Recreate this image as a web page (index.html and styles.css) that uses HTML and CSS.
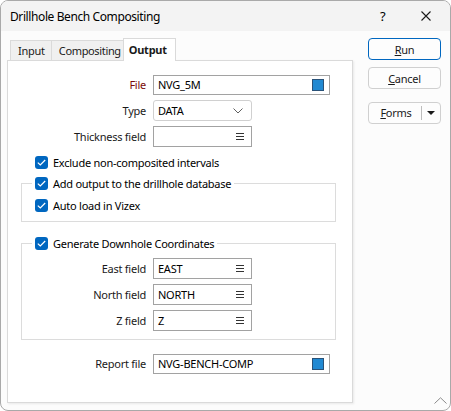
FILE: index.html
```html
<!DOCTYPE html>
<html lang="en">
<head>
    <meta charset="UTF-8">
    <title>Drillhole Bench Compositing</title>
    <link rel="stylesheet" href="styles.css">
</head>
<body>

<div class="window">
    <div class="titlebar">
        <span class="title">Drillhole Bench Compositing</span>
        <span class="help">?</span>
        <span class="close">
            <svg width="10" height="10" viewBox="0 0 10 10"><path d="M0.5 0.5 L9.5 9.5 M9.5 0.5 L0.5 9.5" stroke="#1a1a1a" stroke-width="1.1" fill="none"/></svg>
        </span>
    </div>

    <div class="content">
        <div class="main">
            <div class="tabs">
                <div class="tab input">Input</div>
                <div class="tab compositing">Compositing</div>
                <div class="tab active">Output</div>
            </div>

            <div class="panel">
                <div class="row">
                    <label class="label required">File</label>
                    <div class="field wide">
                        <span>NVG_5M</span>
                        <span class="file-icon"></span>
                    </div>
                </div>
                <div class="row">
                    <label class="label">Type</label>
                    <div class="field combo">
                        <span>DATA</span>
                        <svg width="10" height="6" viewBox="0 0 10 6"><path d="M0.5 0.5 L5 5 L9.5 0.5" stroke="#606060" fill="none"/></svg>
                    </div>
                </div>
                <div class="row">
                    <label class="label">Thickness field</label>
                    <div class="field">
                        <span></span>
                        <span class="list-icon"></span>
                    </div>
                </div>

                <div class="check-row top">
                    <span class="check"><svg width="9" height="7" viewBox="0 0 9 7"><path d="M0.8 3.6 L3.3 6 L8.2 1" stroke="#fff" stroke-width="1.2" fill="none"/></svg></span>
                    <span>Exclude non-composited intervals</span>
                </div>

                <fieldset class="group first">
                    <legend class="check-row">
                        <span class="check"><svg width="9" height="7" viewBox="0 0 9 7"><path d="M0.8 3.6 L3.3 6 L8.2 1" stroke="#fff" stroke-width="1.2" fill="none"/></svg></span>
                        <span>Add output to the drillhole database</span>
                    </legend>
                    <div class="check-row inner">
                        <span class="check"><svg width="9" height="7" viewBox="0 0 9 7"><path d="M0.8 3.6 L3.3 6 L8.2 1" stroke="#fff" stroke-width="1.2" fill="none"/></svg></span>
                        <span>Auto load in Vizex</span>
                    </div>
                </fieldset>

                <fieldset class="group second">
                    <legend class="check-row">
                        <span class="check"><svg width="9" height="7" viewBox="0 0 9 7"><path d="M0.8 3.6 L3.3 6 L8.2 1" stroke="#fff" stroke-width="1.2" fill="none"/></svg></span>
                        <span>Generate Downhole Coordinates</span>
                    </legend>
                    <div class="row">
                        <label class="label">East field</label>
                        <div class="field">
                            <span>EAST</span>
                            <span class="list-icon"></span>
                        </div>
                    </div>
                    <div class="row">
                        <label class="label">North field</label>
                        <div class="field">
                            <span>NORTH</span>
                            <span class="list-icon"></span>
                        </div>
                    </div>
                    <div class="row">
                        <label class="label">Z field</label>
                        <div class="field">
                            <span>Z</span>
                            <span class="list-icon"></span>
                        </div>
                    </div>
                </fieldset>

                <div class="row report">
                    <label class="label">Report file</label>
                    <div class="field wide">
                        <span>NVG-BENCH-COMP</span>
                        <span class="file-icon"></span>
                    </div>
                </div>
            </div>
        </div>

        <div class="buttons">
            <button class="btn primary"><u>R</u>un</button>
            <button class="btn"><u>C</u>ancel</button>
            <div class="btn split">
                <span class="split-text"><u>F</u>orms</span>
                <span class="split-arrow"></span>
            </div>
        </div>
    </div>

    <span class="grip">
        <svg width="13" height="7" viewBox="0 0 13 7"><path d="M0.5 6.5 L6.5 0.8 L12.5 6.5" stroke="#8a8a8a" fill="none"/></svg>
    </span>
</div>

</body>
</html>
```

FILE: styles.css
```css
/* Dialog window */
body {
    margin: 0;
    padding: 0;
    font-family: "Noto Sans", "Open Sans", sans-serif;
    font-size: 11px;
    letter-spacing: -0.25px;
    color: #000;
    background-color: #fff;
}
.window {
    position: relative;
    width: 451px;
    height: 411px;
    box-sizing: border-box;
    border: 1px solid #a9a9a9;
    border-radius: 8px;
    overflow: hidden;
    background-color: #fcfcfc;
}
.titlebar {
    display: flex;
    align-items: center;
    height: 30px;
    padding-left: 9px;
    background-color: #f3f3f3;
    font-size: 12px;
    letter-spacing: -0.4px;
}
.title {
    flex: 1;
}
.help {
    width: 12px;
    margin-right: 29px;
    font-size: 13px;
}
.close {
    display: flex;
    margin-right: 19px;
}

.content {
    display: flex;
    padding: 6px 0 0 6px;
}
.main {
    width: 346px;
}

/* Tabs */
.tabs {
    display: flex;
    align-items: flex-end;
    height: 23px;
    padding-left: 3px;
}
.tab {
    height: 20px;
    line-height: 19px;
    box-sizing: border-box;
    border: 1px solid #dadada;
    border-bottom: none;
    border-right: none;
    background-color: #f0f0f0;
    color: #1a1a1a;
}
.tab.input {
    padding: 0 6px 0 7px;
}
.tab.compositing {
    padding: 0 2px 0 7px;
    letter-spacing: -0.35px;
}
.tab.active {
    height: 23px;
    line-height: 21px;
    padding: 0 8px 0 5px;
    border-right: 1px solid #dadada;
    background-color: #fff;
    font-weight: bold;
    margin-bottom: -1px;
    position: relative;
}
.panel {
    height: 343px;
    box-sizing: border-box;
    border: 1px solid #dadada;
    background-color: #fff;
    box-shadow: 1px 1px 2px rgba(0, 0, 0, 0.08);
    padding-top: 13px;
}

/* Form rows */
.row {
    display: flex;
    align-items: center;
    height: 21px;
    margin-bottom: 5px;
}
.label {
    width: 138px;
    margin-right: 7px;
    text-align: right;
    color: #1a1a1a;
}
.label.required {
    color: #7b0a0a;
}
.field {
    display: flex;
    align-items: center;
    justify-content: space-between;
    width: 99px;
    height: 21px;
    box-sizing: border-box;
    border: 1px solid #a2a2a2;
    padding: 0 6px 0 4px;
    background-color: #fff;
}
.field.wide {
    width: 177px;
    height: 20px;
    padding-right: 5px;
}
.field.combo {
    border-color: #d0d0d0;
    border-radius: 3px;
    padding-right: 8px;
}
.file-icon {
    width: 10px;
    height: 10px;
    border: 1px solid #2a5278;
    background-color: #2189d2;
}
.list-icon {
    width: 8px;
    height: 7px;
    box-sizing: border-box;
    border-top: 1px solid #333;
    border-bottom: 1px solid #333;
    background: linear-gradient(#333, #333) center / 100% 1px no-repeat;
    margin-right: 1px;
}

/* Checkboxes */
.check-row {
    display: flex;
    align-items: center;
    height: 16px;
}
.check-row.top {
    padding-left: 27px;
    margin-top: 7px;
}
.check-row.inner {
    padding-left: 3px;
    margin-top: 6px;
}
.check {
    display: flex;
    align-items: center;
    justify-content: center;
    width: 13px;
    height: 13px;
    margin-right: 5px;
    border-radius: 3px;
    background-color: #0067c0;
}

/* Group boxes */
.group {
    width: 315px;
    box-sizing: border-box;
    margin: 0 0 0 13px;
    padding: 0 10px;
    border: 1px solid #dcdcdc;
}
.group legend {
    padding: 0 3px;
}
.group.first {
    margin-top: 5px;
    padding-bottom: 8px;
}
.group.second {
    margin-top: 13px;
    padding-top: 7px;
    padding-bottom: 8px;
}
.group .label {
    width: 114px;
}
.group .row:last-child {
    margin-bottom: 0;
}
.row.report {
    margin-top: 13px;
}

/* Right-hand buttons */
.buttons {
    display: flex;
    flex-direction: column;
    margin-left: 15px;
    padding-top: 1px;
}
.btn {
    width: 73px;
    height: 22px;
    box-sizing: border-box;
    border: 1px solid #d0d0d0;
    border-radius: 4px;
    background-color: #fdfdfd;
    font-family: inherit;
    font-size: 11px;
    letter-spacing: -0.25px;
    color: #1a1a1a;
    padding: 0;
    margin-bottom: 7px;
}
.btn.primary {
    border-color: #0067c0;
}
.btn.split {
    display: flex;
    align-items: center;
    margin-top: 6px;
}
.split-text {
    flex: 1;
    text-align: center;
    border-right: 1px solid #bdbdbd;
    line-height: 14px;
    padding-left: 2px;
}
.split-arrow {
    width: 0;
    height: 0;
    margin: 0 5px 0 5px;
    border-left: 4px solid transparent;
    border-right: 4px solid transparent;
    border-top: 4px solid #1a1a1a;
}

.grip {
    position: absolute;
    right: 3px;
    bottom: 6px;
    display: flex;
}
```
